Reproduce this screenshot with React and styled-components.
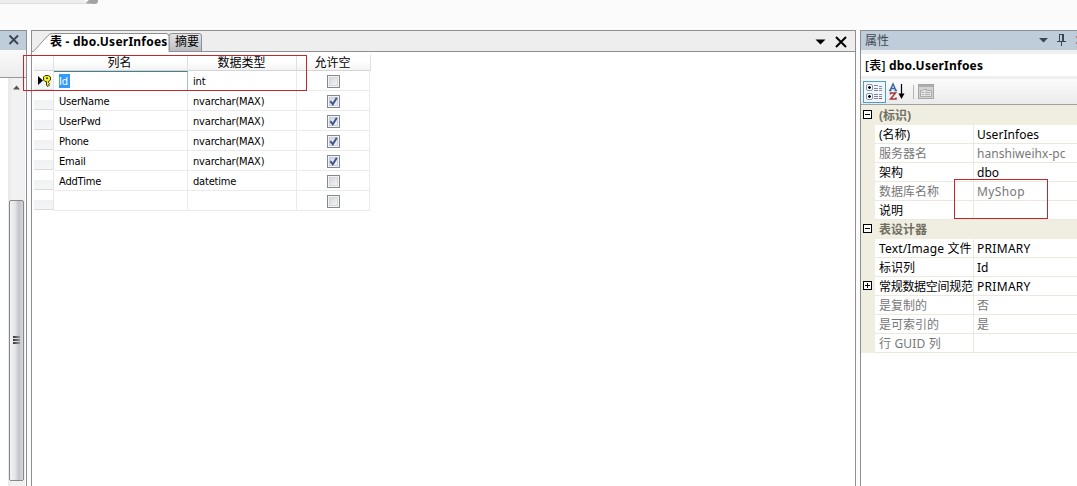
import React from 'react';
import styled, { createGlobalStyle } from 'styled-components';

const Global = createGlobalStyle`
  * { box-sizing: border-box; }
  body { margin: 0; background: #fbfbfb; overflow: hidden; }
`;
const ui = `"Noto Sans", "Noto Sans CJK SC", sans-serif`;
const condensed = `"DejaVu Sans Condensed", "Noto Sans CJK SC", sans-serif`;

const Window = styled.div`
  position: relative;
  width: 1077px; height: 486px; overflow: hidden;
  display: flex; flex-direction: column;
  background: #fbfbfb; color: #000;
  font: 12px/19px ${ui};
`;
const TopStrip = styled.div`
  height: 30px; flex: none;
  svg { display: block; }
`;
const Workspace = styled.div`
  flex: 1; display: flex; gap: 4px; min-height: 0;
`;

/* left dock */
const Dock = styled.div`
  width: 27px; display: flex; flex-direction: column;
  border: solid #8e8f91; border-width: 1px 1px 0 0; background: #fff;
`;
const DockTitle = styled.div`
  height: 19px; background: #bfcddb; display: flex; justify-content: flex-end; align-items: center; padding: 0 6px 2px 0;
`;
const DockTools = styled.div`
  height: 28px; background: linear-gradient(#fafafa, #ececec); border-bottom: 1px solid #9a9a9a;
`;
const ScrollTrack = styled.div`
  flex: 1; width: 17px; margin-left: 8px; background: linear-gradient(90deg, #e9e9e9, #f2f2f2 30%, #f0f0f0);
  display: flex; flex-direction: column; padding: 7px 1px 5px;
  justify-content: space-between; align-items: center;
`;
const Thumb = styled.div`
  width: 15px; height: 281px; border: 1px solid #85878b; border-radius: 2px;
  background: linear-gradient(90deg, #f4f4f5, #e4e5e7 40%, #c3c4ca 68%, #d6d7dc);
  display: flex; flex-direction: column; gap: 1px; align-items: center; justify-content: center; padding-bottom: 2px;
`;
const Grip = styled.i`
  width: 7px; height: 2px; background: linear-gradient(90deg, #333, #999);
`;

/* designer */
const Designer = styled.main`
  width: 825px; border: solid #8e8f91; border-width: 1px 1px 0; background: #fff;
`;
const TabBar = styled.div`
  position: relative; height: 21px; background: #eee; border-bottom: 1px solid #8e8f91;
  display: flex; font-size: 12px; line-height: 20px;
`;
const TabShape = styled.svg`
  position: absolute; left: 0; top: 0;
`;
const TabLabel = styled.div`
  position: relative; margin-left: ${p => p.$gap}px; width: ${p => p.$w}px; white-space: nowrap;
  font-weight: ${p => (p.$active ? 700 : 400)};
  letter-spacing: ${p => p.$ls || 0}px; padding-top: 1px;
`;
const TabActions = styled.div`
  margin-left: auto; padding: 2px 8px 0 0; display: flex; gap: 9px; align-items: center;
`;
const Grid = styled.div`
  width: 338px; margin: 3px 0 0 2px;
`;
const gridCols = `display: grid; grid-template-columns: 20px 134px 109px 73px;`;
const GridHead = styled.div`
  ${gridCols}
  grid-template-columns: 20px 134px 109px 74px;
  height: 16px; font: 12px/13px "Noto Sans CJK SC", sans-serif; text-align: center;
`;
const HeadCell = styled.div`
  background: linear-gradient(#fff 40%, #f3f3f4); border-right: 1px solid #dedfe1; border-bottom: 1px solid #d5d5d5;
  padding-right: ${p => p.$shift || 0}px;
`;
const GridRow = styled.div`
  ${gridCols}
  height: 20px; font: 11px/18px ${condensed}; letter-spacing: -.18px;
`;
const RowMark = styled.div`
  background: linear-gradient(#fff 48%, #f1f2f4 52%, #f4f5f6); border-right: 1px solid #e5e5e5; border-bottom: 1px solid #dadada;
  margin-bottom: 1px; display: flex; align-items: center; padding-left: 3px;
`;
const Cell = styled.div`
  border-right: 1px solid #ebebeb; border-bottom: 1px solid #ebebeb; padding: 2px 0 0 5px; line-height: 17px; white-space: nowrap;
  ${p => p.$focus && 'border-top: 1px solid #45818d; border-right-color: #9fc0d8; border-bottom-color: #9fc0d8; padding: 1px 0 0 5px;'}
`;
const Selected = styled.span`
  display: block; margin-top: 1px; background: #3399ff; color: #fff; height: 14px; line-height: 15px; width: 11px;
`;
const CheckCell = styled(Cell)`
  display: flex; justify-content: center; align-items: flex-start; padding: 4px 0 0 1px;
`;
const Box = styled.span`
  width: 13px; height: 13px; border: 1px solid #85888c; background: linear-gradient(135deg, #cbcfd5, #f6f6f6 85%);
  box-shadow: inset 0 0 0 1px #f4f4f4, inset 0 0 0 2px ${p => (p.$on ? '#c5cede' : '#d4d6d9')};
  svg { display: block; margin: 1px; }
`;

/* properties */
const Props = styled.aside`
  flex: 1; border: solid #8e8f91; border-width: 1px 0 0 1px; background: #fff; min-width: 0; overflow: hidden;
`;
const PropsTitle = styled.div`
  height: 19px; background: #bfcddb; color: #43484e; display: flex; align-items: center; padding: 0 0 2px 4px;
  font: 12px/17px "Noto Sans CJK SC", sans-serif;
  svg { margin: 1px 0 0 auto; }
`;
const ObjectName = styled.div`
  height: 29px; border: solid #f0f0f0; border-width: 4px 0 3px; padding-left: 4px; font-weight: 700; line-height: 23px;
  letter-spacing: .22px;
`;
const ObjectKind = styled.span`
  font-weight: 500;
`;
const PropsTools = styled.div`
  height: 26px; background: linear-gradient(#fbfbfb, #ebebeb); border-bottom: 1px solid #a0a0a0;
  display: flex; align-items: center; padding-left: 1px;
`;
const PropGrid = styled.div`
  background: #f0eee1; height: 248px; padding-top: 1px; display: grid; grid-auto-rows: 19px;
`;
const PropRow = styled.div`
  display: grid; grid-template-columns: 14px 99px 1fr; color: ${p => (p.$dim ? '#777' : '#000')};
`;
const Category = styled.div`
  display: grid; grid-template-columns: 14px 1fr; font-weight: 700; color: #716f64;
`;
const Gutter = styled.div`
  padding: 4px 0 0 2px; svg { display: block; }
`;
const Name = styled.div`
  background: #fff; border-right: 1px solid #ece9dc; border-bottom: 1px solid #ece9dc; padding-left: 4px;
  overflow: hidden; white-space: nowrap; letter-spacing: ${p => p.$ls || 0}px; line-height: 19px;
`;
const Value = styled(Name)`
  border-right: 0; padding-left: 3px;
`;
const CategoryName = styled.div`
  padding-left: 4px;
`;
const Callout = styled.div`
  position: absolute; border: 1px solid #c0282d; pointer-events: none;
  left: ${p => p.$x}px; top: ${p => p.$y}px; width: ${p => p.$w}px; height: ${p => p.$h}px;
`;

const Expander = ({ plus }) => (
  <svg width="9" height="9" shapeRendering="crispEdges">
    <rect x=".5" y=".5" width="8" height="8" fill="#fff" stroke="#000" />
    <path d={plus ? 'M2 4.5h5M4.5 2v5' : 'M2 4.5h5'} stroke="#000" />
  </svg>
);

const Check = ({ on }) => (
  <Box $on={on}>
    {on && (
      <svg width="9" height="9"><path d="M1.3 4.2 3.8 7.2 7.8 .8" fill="none" stroke="#40578f" strokeWidth="2" /></svg>
    )}
  </Box>
);

const KeyMark = () => (
  <svg width="15" height="14">
    <path d="M1 3 6 7.500 1 12z" fill="#000" />
    <path d="M6.500 4 8 2.500h3.500L13.500 4v3L11.500 8.500v1l1 1-1 1 1 .5-1.500 1.500L9.500 12.500V8.500H8L6.500 7z" fill="#f5ee1c" stroke="#3c3900" strokeWidth="1" />
    <path d="M9 4.500h2v1.500h-2z" fill="#3c3900" />
  </svg>
);

const columns = [
  ['UserName', 'nvarchar(MAX)', true],
  ['UserPwd', 'nvarchar(MAX)', true],
  ['Phone', 'nvarchar(MAX)', true],
  ['Email', 'nvarchar(MAX)', true],
  ['AddTime', 'datetime', false],
  ['', '', false],
];
const identity = [
  ['(名称)', 'UserInfoes'],
  ['服务器名', 'hanshiweihx-pc', true],
  ['架构', 'dbo'],
  ['数据库名称', 'MyShop', true],
  ['说明', ''],
];
const designer = [
  ['Text/Image 文件', 'PRIMARY'],
  ['标识列', 'Id'],
  ['常规数据空间规范', 'PRIMARY', false, true],
  ['是复制的', '否', true],
  ['是可索引的', '是', true],
  ['行 GUID 列', '', true],
];

const spacing = name => (/[A-Z]/.test(name) ? 0.15 : name.length > 7 ? -0.3 : 0);

const Rows = ({ items }) => items.map(([name, value, dim, plus]) => (
  <PropRow key={name} $dim={dim}>
    <Gutter>{plus && <Expander plus />}</Gutter>
    <Name $ls={spacing(name)}>{name}</Name>
    <Value $ls={value === 'PRIMARY' ? 0.3 : value === 'MyShop' ? 0.4 : 0.05}>{value}</Value>
  </PropRow>
));

export default function App() {
  return (
    <Window>
      <Global />
      <TopStrip>
        <svg width="110" height="8">
          <path d="M0 0h85v2q0 1-2 1H0z" fill="#ededed" />
          <path d="M0 3.500h84" stroke="#ddd" />
          <path d="M85 3.500 89 0h9v2q-1 2-3 2z" fill="#a3a3a6" />
        </svg>
      </TopStrip>
      <Workspace>
        <Dock>
          <DockTitle>
            <svg width="12" height="12"><path d="M1.500 1.500l8.500 8.500M10 1.500 1.500 10" stroke="#3c4650" strokeWidth="1.900" /></svg>
          </DockTitle>
          <DockTools />
          <ScrollTrack>
            <svg width="7" height="5"><path d="M0 4.500 3.500 .5 7 4.500z" fill="#555" /></svg>
            <Thumb><Grip /><Grip /><Grip /></Thumb>
          </ScrollTrack>
        </Dock>
        <Designer>
          <TabBar>
            <TabShape width="190" height="21">
              <defs>
                <linearGradient id="tab" x2="0" y2="1"><stop stopColor="#e6e6e6" /><stop offset="1" stopColor="#b9bac0" /></linearGradient>
              </defs>
              <path d="M137 20.500V5q0-2.500 3-2.500h27q2.500 0 2.500 2.500v15.500z" fill="url(#tab)" stroke="#8e8f91" />
              <path d="M0 21 1.500 20.500 15.500 5q2-2.500 5-2.500H134q3 0 3 3V21z" fill="#fff" />
              <path d="M1.500 20.500 15.500 5q2-2.500 5-2.500H134q3 0 3 3v15" fill="none" stroke="#8e8f91" />
            </TabShape>
            <TabLabel $active $gap={18} $w={124} $ls={0.24}>表 - dbo.UserInfoes</TabLabel>
            <TabLabel $gap={1}>摘要</TabLabel>
            <TabActions>
              <svg width="11" height="6"><path d="M.5 .5h10L5.500 5.500z" /></svg>
              <svg width="12" height="12"><path d="M1 1l10 10M11 1 1 11" stroke="#000" strokeWidth="2" /></svg>
            </TabActions>
          </TabBar>
          <Grid>
            <GridHead>
              <HeadCell /><HeadCell $shift={2}>列名</HeadCell><HeadCell $shift={1}>数据类型</HeadCell><HeadCell $shift={2}>允许空</HeadCell>
            </GridHead>
            <GridRow>
              <RowMark><KeyMark /></RowMark>
              <Cell $focus><Selected>Id</Selected></Cell>
              <Cell>int</Cell>
              <CheckCell><Check /></CheckCell>
            </GridRow>
            {columns.map(([name, type, on], i) => (
              <GridRow key={i}>
                <RowMark />
                <Cell>{name}</Cell>
                <Cell>{type}</Cell>
                <CheckCell><Check on={on} /></CheckCell>
              </GridRow>
            ))}
          </Grid>
        </Designer>
        <Props>
          <PropsTitle>
            属性
            <svg width="39" height="18">
              <path d="M1 7h9L5.500 11.500z" fill="#3c4650" />
              <path d="M21.500 3v7M25.500 3v7M21 3.500h5M19 10.500h9M23.500 11v4M24.500 4v6" fill="none" stroke="#3c4650" />
              <path d="M38 5l1 2M38 13l1-2" stroke="#b46a50" />
            </svg>
          </PropsTitle>
          <ObjectName><ObjectKind>[表]</ObjectKind> dbo.UserInfoes</ObjectName>
          <PropsTools>
            <svg width="76" height="24">
              <rect x="1.500" y="1.500" width="22" height="21" fill="#f0f7fc" stroke="#4a9bd5" />
              <g fill="#fff" stroke="#8794ae">
                <rect x="4.500" y="4.500" width="6" height="6" rx="1.500" /><rect x="4.500" y="13.500" width="6" height="6" rx="1.500" />
              </g>
              <path d="M6 7.500h3M7.500 6v3M6 16.500h3M7.500 15v3" stroke="#000" strokeWidth="1.300" />
              <path d="M12 5.500h4M12 8.500h4M12 10.500h4M12 14.500h4M12 16.500h4M12 18.500h4" stroke="#7c829f" />
              <path d="M17 6.500h3M17 8.500h3M17 10.500h3M17 14.500h3M17 16.500h3" stroke="#8b8b93" />
              <path d="M17 18.500h3" stroke="#a94e50" />
              <path d="M28 10.500 31 4 34 10.500M29 8.500h4M27 10.500h2.500M32.500 10.500h2.500" fill="none" stroke="#3a62a8" strokeWidth="1.400" />
              <path d="M28.500 14.500v-1.500h5L28.500 19H34v-1.500" fill="none" stroke="#9d3a3a" strokeWidth="1.500" />
              <path d="M39.500 4v12" stroke="#000" strokeWidth="1.200" /><path d="M36.500 13.500h6L39.500 19z" />
              <path d="M51.500 5v14" stroke="#b5b5b5" />
              <rect x="56.500" y="4.500" width="15" height="14" fill="#d2d2d2" stroke="#a6a6a6" />
              <path d="M57 6h14" stroke="#adadad" strokeWidth="2" />
              <path d="M58.500 16.500v-6h2l1-1h3v1h5v6z" fill="#e2e2e2" stroke="#aaa" />
              <path d="M60 12.500h2M60 14.500h2M63 12.500h5M63 14.500h5" stroke="#b0b0b0" />
            </svg>
          </PropsTools>
          <PropGrid>
            <Category><Gutter><Expander /></Gutter><CategoryName>(标识)</CategoryName></Category>
            <Rows items={identity} />
            <Category><Gutter><Expander /></Gutter><CategoryName>表设计器</CategoryName></Category>
            <Rows items={designer} />
          </PropGrid>
        </Props>
      </Workspace>
      <Callout $x={23} $y={55} $w={284} $h={36} />
      <Callout $x={954} $y={179} $w={94} $h={40} />
    </Window>
  );
}
